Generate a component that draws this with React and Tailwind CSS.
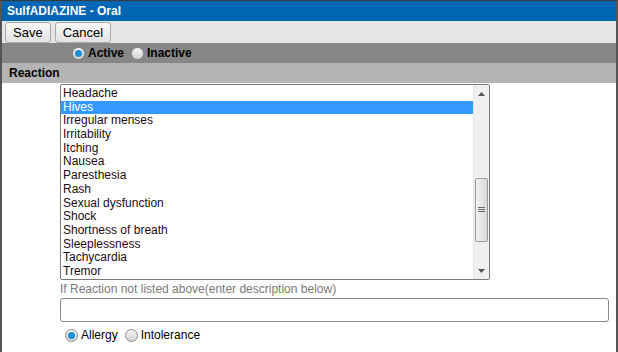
import React from 'react';

const FONT = { fontFamily: '"Liberation Sans", Arial, sans-serif' };

const REACTIONS = [
  'Headache', 'Hives', 'Irregular menses', 'Irritability', 'Itching', 'Nausea',
  'Paresthesia', 'Rash', 'Sexual dysfunction', 'Shock', 'Shortness of breath',
  'Sleeplessness', 'Tachycardia', 'Tremor',
];

const Radio = ({ checked }) => (
  <span className="inline-flex items-center justify-center w-[13px] h-[13px] rounded-full border border-[#8a8a8a] bg-gradient-to-b from-[#f4f4f4] to-[#d4d4d4] flex-shrink-0">
    {checked && <span className="w-[7px] h-[7px] rounded-full bg-[#1a8fd6]" />}
  </span>
);

const Btn = ({ children }) => (
  <button className="h-[21px] px-[7px] border border-[#a9a9a9] rounded-[3px] bg-gradient-to-b from-[#fafafa] to-[#e2e2e2] text-[13px] text-black leading-none">
    {children}
  </button>
);

export default function App() {
  return (
    <div className="w-[618px] h-[352px] flex flex-col bg-white border-t border-[#3a3a3a] border-x-2 border-x-[#555] overflow-hidden" style={FONT}>
      {/* Title */}
      <div className="h-[20px] flex items-center px-[5px] bg-[#0066b3] text-white text-[12px] font-bold">
        SulfADIAZINE - Oral
      </div>

      {/* Toolbar */}
      <div className="h-[22px] flex items-center gap-[4px] px-[3px] bg-[#e6e6e6]">
        <Btn>Save</Btn>
        <Btn>Cancel</Btn>
      </div>

      {/* Status */}
      <div className="h-[20px] flex items-center pl-[70px] gap-[3px] bg-[#878787] text-[12px] font-bold text-black">
        <Radio checked />
        <span className="mr-[4px]">Active</span>
        <Radio />
        <span>Inactive</span>
      </div>

      {/* Section header */}
      <div className="h-[20px] flex items-center px-[7px] bg-[#b4b4b4] text-[12px] font-bold text-black">
        Reaction
      </div>

      {/* Body */}
      <div className="flex flex-col pl-[58px] pr-[7px]">
        <div className="mt-px w-[430px] h-[196px] flex border border-[#7a7a7a] rounded-[2px] bg-white">
          <div className="flex-1 overflow-hidden pt-[2px]">
            {REACTIONS.map((r) => (
              <div
                key={r}
                className={`h-[13.7px] leading-[13.7px] pl-[2px] text-[12px] whitespace-nowrap ${r === 'Hives' ? 'bg-[#3399ff] text-white' : 'text-[#1c0b14]'}`}
              >
                {r}
              </div>
            ))}
          </div>
          {/* Scrollbar */}
          <div className="w-[16px] flex flex-col bg-[#f0f0f0] border-l border-[#e6e6e6]">
            <div className="h-[17px] flex items-center justify-center text-[#555]">
              <svg width="7" height="4" viewBox="0 0 7 4"><path d="M0 4 L3.5 0 L7 4 Z" fill="currentColor" /></svg>
            </div>
            <div className="h-[76px]" />
            <div className="h-[64px] mx-px flex items-center justify-center rounded-[2px] border border-[#9a9a9a] bg-gradient-to-r from-[#f2f2f2] to-[#d8d8d8]">
              <svg width="7" height="6" viewBox="0 0 7 6">
                <path d="M0 0.5 H7 M0 2.5 H7 M0 4.5 H7" stroke="#666" strokeWidth="1" />
              </svg>
            </div>
            <div className="flex-1" />
            <div className="h-[17px] flex items-center justify-center text-[#555]">
              <svg width="7" height="4" viewBox="0 0 7 4"><path d="M0 0 L3.5 4 L7 0 Z" fill="currentColor" /></svg>
            </div>
          </div>
        </div>

        <div className="mt-[2px] text-[12px] leading-[14px] text-[#7a7a7a]">
          If Reaction not listed above(enter description below)
        </div>

        <div className="mt-[2px] h-[24px] w-[549px] border border-[#8a8a8a] rounded-[3px] bg-white" />

        <div className="mt-[4px] flex items-center gap-[3px] pl-[5px] text-[12px] text-black">
          <Radio checked />
          <span className="mr-[4px]">Allergy</span>
          <Radio />
          <span>Intolerance</span>
        </div>
      </div>
    </div>
  );
}
